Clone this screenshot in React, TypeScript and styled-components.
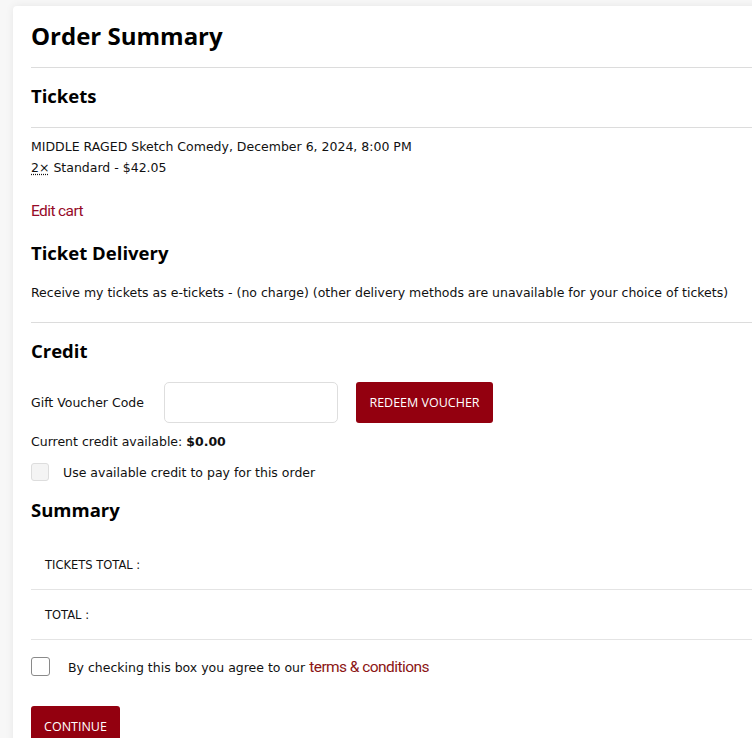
import React from "react";
import styled, { createGlobalStyle } from "styled-components";

const Global = createGlobalStyle`
  html, body { margin: 0; padding: 0; background: #f7f7f7; overflow: hidden; }
  body { font-family: "DejaVu Sans", "Open Sans", sans-serif; color: #111; }
  * { box-sizing: border-box; }
`;

const Page = styled.div`
  padding: 6px 0 0 13px;
  width: 752px;
  height: 738px;
  overflow: hidden;
`;

const Card = styled.div`
  width: 780px;
  background: #fff;
  border-radius: 4px;
  box-shadow: 0 0 8px rgba(0, 0, 0, 0.07);
  padding: 15px 0 40px 18px;
`;

const Title = styled.h1`
  margin: 0;
  font-family: "Open Sans", sans-serif;
  font-size: 24px;
  line-height: 30px;
  font-weight: 700;
  color: #000;
`;

const Rule = styled.hr<{ $top: number }>`
  margin: ${(p) => p.$top}px 0 0;
  border: 0;
  border-top: 1px solid #dcdcdc;
  height: 0;
`;

const Heading = styled.h2<{ $top: number }>`
  margin: ${(p) => p.$top}px 0 0;
  font-family: "Open Sans", sans-serif;
  font-size: 18.5px;
  line-height: 24px;
  font-weight: 700;
  color: #000;
`;

const Text = styled.p<{ $top: number; $lh?: number }>`
  margin: ${(p) => p.$top}px 0 0;
  font-size: 12.5px;
  line-height: ${(p) => p.$lh ?? 20}px;
  color: #111;
`;

const Qty = styled.abbr`
  text-decoration: underline dotted;
  text-underline-offset: 2px;
`;

const EditLink = styled.a`
  display: block;
  margin-top: 22px;
  font-family: "Roboto", sans-serif;
  font-size: 15.5px;
  line-height: 22px;
  color: #960a28;
  text-decoration: none;
  letter-spacing: -0.6px;
`;

const VoucherRow = styled.div`
  display: flex;
  align-items: center;
  margin-top: 19px;
  height: 41px;
`;

const Label = styled.label`
  font-size: 12.5px;
  color: #111;
  width: 133px;
  white-space: nowrap;
`;

const Input = styled.input`
  width: 174px;
  height: 41px;
  border: 1px solid #dedede;
  border-radius: 5px;
  background: #fff;
  outline: none;
`;

const Button = styled.button<{ $width: number; $top?: number }>`
  margin: ${(p) => p.$top ?? 0}px 0 0 ${(p) => (p.$top ? 0 : 18)}px;
  width: ${(p) => p.$width}px;
  height: 41px;
  background: #93000f;
  color: #fff;
  border: 0;
  border-radius: 3px;
  font-family: "Open Sans", sans-serif;
  font-size: 12.5px;
  font-weight: 500;
  text-transform: uppercase;
  padding: 0;
`;

const CheckRow = styled.label<{ $top: number; $gap: number }>`
  display: flex;
  align-items: center;
  gap: ${(p) => p.$gap}px;
  margin-top: ${(p) => p.$top}px;
  font-size: 12.5px;
  color: #111;
`;

const Box = styled.span<{ $size: number; $disabled?: boolean }>`
  display: inline-block;
  width: ${(p) => p.$size}px;
  height: ${(p) => p.$size}px;
  border-radius: 3px;
  border: 1px solid ${(p) => (p.$disabled ? "#dddddd" : "#8a8a8a")};
  background: ${(p) => (p.$disabled ? "#f4f4f4" : "#fff")};
  flex: none;
`;

const Terms = styled.a`
  font-family: "Roboto", sans-serif;
  font-size: 15.5px;
  color: #8c1414;
  text-decoration: none;
  margin-left: 4px;
  letter-spacing: -0.55px;
`;

const SummaryTable = styled.div`
  margin-top: 18px;
`;

const SumRow = styled.div`
  display: flex;
  align-items: center;
  height: 50px;
  padding-left: 14px;
  border-bottom: 1px solid #e4e4e4;
  font-size: 11.5px;
  color: #111;
  text-transform: uppercase;
`;

export default function App() {
  return (
    <>
      <Global />
      <Page>
        <Card>
          <Title>Order Summary</Title>
          <Rule $top={16} />
          <Heading $top={16}>Tickets</Heading>
          <Rule $top={19} />
          <Text $top={8} $lh={21}>
            MIDDLE RAGED Sketch Comedy, December 6, 2024, 8:00 PM
            <br />
            <Qty title="quantity">2×</Qty> Standard - $42.05
          </Text>
          <EditLink href="#">Edit cart</EditLink>
          <Heading $top={19}>Ticket Delivery</Heading>
          <Text $top={18}>
            Receive my tickets as e-tickets - (no charge) (other delivery methods are unavailable for your choice of tickets)
          </Text>
          <Rule $top={19} />
          <Heading $top={16}>Credit</Heading>
          <VoucherRow>
            <Label>Gift Voucher Code</Label>
            <Input type="text" />
            <Button $width={137}>Redeem Voucher</Button>
          </VoucherRow>
          <Text $top={9}>
            Current credit available: <b>$0.00</b>
          </Text>
          <CheckRow $top={11} $gap={14}>
            <Box $size={18} $disabled />
            Use available credit to pay for this order
          </CheckRow>
          <Heading $top={17}>Summary</Heading>
          <SummaryTable>
            <SumRow>Tickets Total :</SumRow>
            <SumRow>Total :</SumRow>
          </SummaryTable>
          <CheckRow $top={17} $gap={18}>
            <Box $size={19} />
            <span>
              By checking this box you agree to our
              <Terms href="#">terms &amp; conditions</Terms>
            </span>
          </CheckRow>
          <Button $width={89} $top={30}>Continue</Button>
        </Card>
      </Page>
    </>
  );
}
